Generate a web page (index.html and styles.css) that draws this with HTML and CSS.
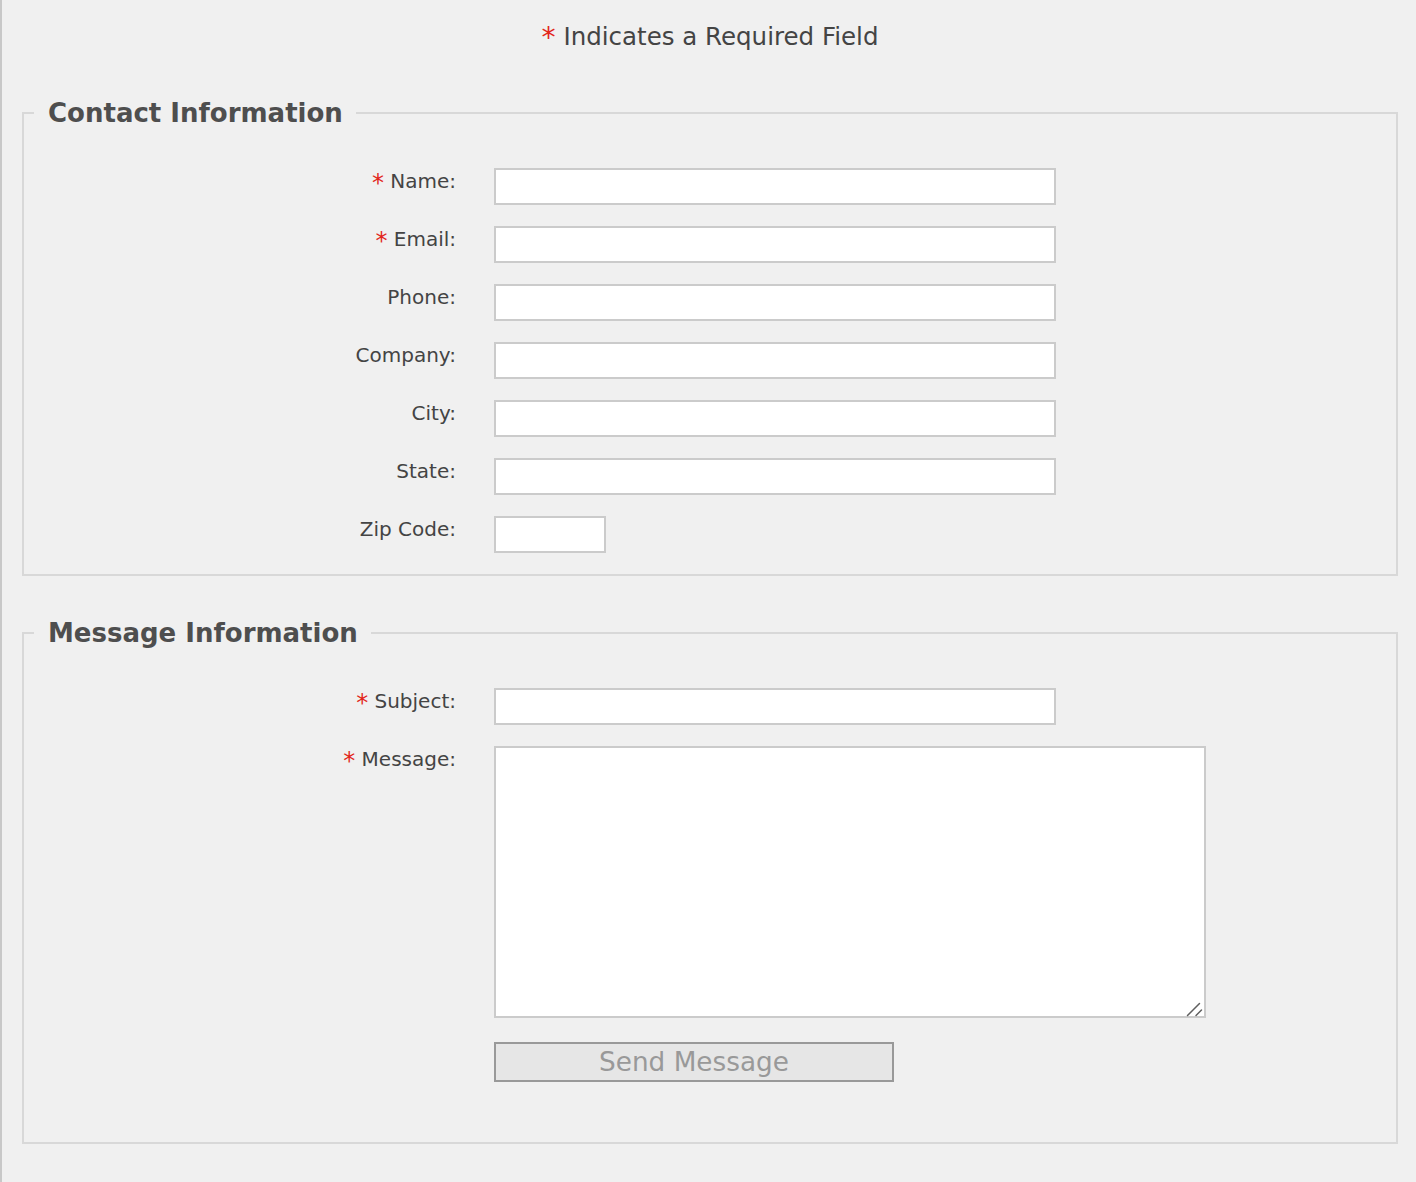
FILE: index.html
```html
<!DOCTYPE html>
<html>
<head>
<meta charset="utf-8">
<link rel="stylesheet" href="styles.css">
</head>
<body>
<div class="page">
  <p class="required-note"><span class="req">*</span> Indicates a Required Field</p>
  <form class="form">
    <fieldset class="group group-contact">
      <legend>Contact Information</legend>
      <div class="row"><label class="lbl"><span class="req">*</span> Name:</label><input class="field" type="text"></div>
      <div class="row"><label class="lbl"><span class="req">*</span> Email:</label><input class="field" type="text"></div>
      <div class="row"><label class="lbl">Phone:</label><input class="field" type="text"></div>
      <div class="row"><label class="lbl">Company:</label><input class="field" type="text"></div>
      <div class="row"><label class="lbl">City:</label><input class="field" type="text"></div>
      <div class="row"><label class="lbl">State:</label><input class="field" type="text"></div>
      <div class="row"><label class="lbl">Zip Code:</label><input class="field field-zip" type="text"></div>
    </fieldset>
    <fieldset class="group group-message">
      <legend>Message Information</legend>
      <div class="row"><label class="lbl"><span class="req">*</span> Subject:</label><input class="field" type="text"></div>
      <div class="row"><label class="lbl"><span class="req">*</span> Message:</label>
        <div class="area-wrap">
          <textarea class="field field-area"></textarea>
          <svg class="grip" width="18" height="16" viewBox="0 0 18 16"><path d="M2.5 14.5 L14.5 2.5 M11 14.5 L16.5 9" stroke="#5f5f5f" stroke-width="1.5" stroke-linecap="round" fill="none"/></svg>
        </div>
      </div>
      <div class="row row-submit"><span class="lbl"></span><button class="send" type="button">Send Message</button></div>
    </fieldset>
  </form>
</div>
</body>
</html>
```

FILE: styles.css
```css
html, body {
  margin: 0;
  padding: 0;
  background: #f0f0f0;
}
body {
  font-family: "DejaVu Sans", Verdana, sans-serif;
  color: #444;
  min-height: 1182px;
  border-left: 2px solid #c8c8c8;
  box-sizing: border-box;
}
.page {
  padding: 20px 18px 38px 20px;
}
.required-note {
  margin: 0;
  text-align: center;
  font-size: 24.5px;
  line-height: 34px;
  color: #444;
}
.required-note .req {
  font-size: 1.15em;
  line-height: 0;
  vertical-align: -0.08em;
}
.req {
  color: #e2261b;
}
.form {
  margin-top: 44px;
}
.group {
  margin: 0;
  padding: 40px 0 0 0;
  border: 2px solid #d8d8d8;
  min-width: 0;
}
.group-message {
  margin-top: 42px;
  padding-bottom: 39px;
}
.group legend {
  margin-left: 10px;
  padding: 0 13px 0 14px;
  font-size: 26px;
  font-weight: bold;
  color: #4e4e4e;
  line-height: 30px;
}
.row {
  display: flex;
  align-items: flex-start;
  margin-bottom: 21px;
}
.lbl {
  width: 432px;
  flex: none;
  text-align: right;
  font-size: 20px;
  line-height: 24px;
  padding-top: 1px;
  color: #444;
}
.lbl .req {
  font-size: 1.2em;
  line-height: 0;
  vertical-align: -0.12em;
}
.field {
  margin-left: 38px;
  width: 562px;
  height: 37px;
  box-sizing: border-box;
  border: 2px solid #cbcbcb;
  background: #fff;
  padding: 0 6px;
  font-family: inherit;
  font-size: 18px;
  border-radius: 0;
  outline: none;
}
.field-zip {
  width: 112px;
}
.area-wrap {
  position: relative;
  margin-left: 38px;
}
.field-area {
  margin-left: 0;
  width: 712px;
  height: 272px;
  resize: none;
  display: block;
}
.grip {
  position: absolute;
  right: 3px;
  bottom: 1px;
}
.row-submit {
  margin-top: 24px;
}
.send {
  margin-left: 38px;
  width: 400px;
  height: 40px;
  box-sizing: border-box;
  border: 2px solid #999;
  background: #e6e6e6;
  color: #999;
  font-family: inherit;
  font-size: 26.3px;
  padding: 0;
  border-radius: 0;
}
```
